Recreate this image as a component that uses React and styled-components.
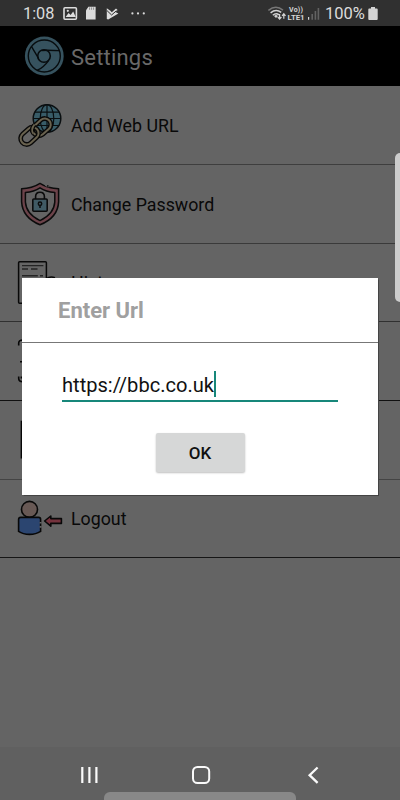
import React from 'react'
import styled, { createGlobalStyle } from 'styled-components'

export default function App() {
  return (
    <Screen>
      <GlobalStyle />
      <StatusBar>
        <Clock>1:08</Clock>
        <NotificationIcons />
        <Spacer />
        <SignalIcons />
        <Percent>100%</Percent>
        <BatteryIcon />
      </StatusBar>

      <Header>
        <BrowserLogo />
        <HeaderTitle>Settings</HeaderTitle>
      </Header>

      <SettingsList>
        <Row line="#3e3e3e">
          <WebIcon />
          <RowLabel>Add Web URL</RowLabel>
        </Row>
        <Row line="#3a3a3a">
          <ShieldIcon />
          <RowLabel>Change Password</RowLabel>
        </Row>
        <Row line="#303030" short>
          <HistoryIcon />
          <RowLabel>History</RowLabel>
        </Row>
        <Row line="#111">
          <ScanIcon />
          <ToggleEdge />
        </Row>
        <Row line="#444">
          <PageIcon />
        </Row>
        <Row line="#161616" short>
          <LogoutIcon />
          <RowLabel>Logout</RowLabel>
        </Row>
      </SettingsList>

      <NavBar>
        <NavIcons />
      </NavBar>

      <EdgeHandle />
      <GestureHandle />

      <Dialog>
        <DialogTitle>Enter Url</DialogTitle>
        <DialogBody>
          <UrlField>
            <UrlText>https://bbc.co.uk</UrlText>
            <Caret />
          </UrlField>
          <OkButton>OK</OkButton>
        </DialogBody>
      </Dialog>
    </Screen>
  )
}

const NotificationIcons = () => (
  <svg width="92" height="26" viewBox="0 0 92 26" fill="#dcdcdc">
    <rect x="1" y="7.8" width="12.4" height="11.4" rx="1" fill="none" stroke="#dcdcdc" strokeWidth="1.6" />
    <path d="M2.6 17 5.6 13l2 2 2.6-3.4 2.6 5.4z" />
    <circle cx="4.8" cy="10.8" r="1.1" />
    <path d="M25.4 6.8h7.2v12.8h-9.6v-9.4z" />
    <path d="M26.6 7.4v2.4M28.6 7.4v2.4M30.6 7.4v2.4" stroke="#777" strokeWidth=".8" />
    <path d="M43.8 8.2 47.4 10.8 48.8 12.2 53 8.4 54.6 10 52.4 12 55.4 13.4 45.2 19.6 43.8 19z" />
    <path d="m44 10.6 4.6 4.4 4.8-4.2" fill="none" stroke="#303030" strokeWidth="1" />
    <circle cx="69.4" cy="13.4" r="1.1" />
    <circle cx="75" cy="13.4" r="1.1" />
    <circle cx="80.8" cy="13.4" r="1.1" />
  </svg>
)

const SignalIcons = () => (
  <svg width="57" height="26" viewBox="268 0 57 26" fill="#d4d4d4">
    <g fill="none" strokeWidth="1.5">
      <path d="M268.4 10.4Q275.8 4.4 283 10.2" stroke="#777" />
      <path d="M270.6 12.8Q276 8.4 281.2 12.4M272.8 15.2Q276 12.4 279 14.8" stroke="#d4d4d4" />
    </g>
    <path d="m274 16 2-1.2 2 1.2-2 2z" />
    <path d="M279.6 14v5m-1.8-2 1.8 2 1.8-2M283.8 18.8v-5m-1.7 2 1.7-2 1.7 2" fill="none" stroke="#d4d4d4" strokeWidth="1.2" />
    <NetworkText x="289" y="12" textLength="14" fontSize="7">Vo))</NetworkText>
    <NetworkText x="287.6" y="19.8" textLength="17" fontSize="7.9">LTE1</NetworkText>
    <path d="M308 17h1.2v2.8H308z" />
    <path d="M311.4 14h1.6v5.8h-1.6zM314.6 11h1.6v8.8h-1.6zM317.6 8h1.6v11.8h-1.6z" fill="#626262" />
  </svg>
)

const BatteryIcon = () => (
  <svg width="10" height="26" viewBox="0 0 10 26" fill="#d4d4d4">
    <path d="M3 7h4v1.5h1.8q.9 0 .9.9v9.7q0 .9-.9.9H1.2q-.9 0-.9-.9V9.4q0-.9.9-.9H3z" />
  </svg>
)

const BrowserLogo = () => (
  <svg width="71" height="60" viewBox="0 26 71 60">
    <circle cx="44.3" cy="56" r="19.4" fill="#36525e" />
    <g fill="none" stroke="#070c0e" strokeWidth="1.4">
      <circle cx="44.3" cy="56" r="16" />
      <circle cx="44" cy="56" r="6.3" strokeWidth="1.6" />
      <path d="M42 50.6Q44 50 60 50.6M38.4 58.2 31.4 46.4M48.4 60.8Q43.6 67.4 37.4 70.2" />
    </g>
  </svg>
)

const WebIcon = () => (
  <svg width="71" height="78" viewBox="0 86 71 78" fill="none" strokeLinejoin="round">
    <circle cx="47" cy="118.5" r="13.8" fill="#385c68" stroke="#0a0f11" strokeWidth="1.5" />
    <g stroke="#0a0f11" strokeWidth="1.2">
      <ellipse cx="47" cy="118.5" rx="6.8" ry="13.8" />
      <path d="M47 104.7v27.6M34.6 112.2h24.8M33.2 118.5h27.6M34.6 125.5h24.8" />
    </g>
    <g>
      <rect x="-10" y="-6" width="20" height="12" rx="6" transform="translate(41.8 127.2) rotate(-42)" stroke="#090909" strokeWidth="4.8" />
      <rect x="-10" y="-6" width="20" height="12" rx="6" transform="translate(41.8 127.2) rotate(-42)" stroke="#69624f" strokeWidth="2" />
      <rect x="-10" y="-6" width="20" height="12" rx="6" transform="translate(29.6 135.8) rotate(-42)" stroke="#090909" strokeWidth="4.8" />
      <rect x="-10" y="-6" width="20" height="12" rx="6" transform="translate(29.6 135.8) rotate(-42)" stroke="#69624f" strokeWidth="2" />
      <path d="M34.2 125.2q-3.8 4.7-.8 8.2" stroke="#090909" strokeWidth="4.4" />
      <path d="M34.4 124.6q-4 5-1 9.2" stroke="#69624f" strokeWidth="1.8" />
    </g>
  </svg>
)

const ShieldIcon = () => (
  <svg width="71" height="78" viewBox="0 165 71 78" fill="none" stroke="#0b0b0b" strokeWidth="1.5" strokeLinejoin="round">
    <path d="M40 183.4Q48 188.6 58.6 188.8V201.6Q58 217.5 40 224.8 22.4 217.5 21.6 201.6V188.8Q32 188.6 40 183.4z" fill="#6c434a" />
    <path d="M40 187.8Q46 191.8 54.8 192.6V202Q54 214 40 220.6 26.2 214 25.4 202V192.6Q34 191.8 40 187.8z" fill="#646464" />
    <path d="M45.4 184.8 48.8 186.6" stroke="#646464" strokeWidth="2" />
    <path d="M47 186h1.5" />
    <path d="M35.6 199v-2.4q0-4.4 4.4-4.4t4.4 4.4v2.4" strokeWidth="1.6" />
    <rect x="32.8" y="199" width="14.4" height="12.2" rx="1" fill="#405a64" strokeWidth="1.6" />
    <circle cx="40" cy="203.8" r="1.7" />
    <path d="M40 205.5v2.5" />
  </svg>
)

const HistoryIcon = () => (
  <svg width="71" height="77" viewBox="0 244 71 77" fill="none" stroke="#090909">
    <rect x="18.6" y="261.7" width="27.8" height="41.6" rx="1" strokeWidth="1.5" fill="#656565" />
    <path d="M22 265.6h21.4M22 269h6M31 269h6.5M22 275.8h15.8M40 275.8h3" stroke="#242424" strokeWidth="1.4" />
    <path d="M46 278.8Q50 275.8 55 277.6" strokeWidth="1.5" />
  </svg>
)

const ScanIcon = () => (
  <svg width="71" height="78" viewBox="0 322 71 78" fill="none" stroke="#070707" strokeWidth="1.6">
    <path d="M18.7 345.5V343Q18.7 340 23 340M20 361.8h3M18.7 376.4v2.2q0 3.2 4 3.2M21.4 376.4v2" />
  </svg>
)

const PageIcon = () => (
  <svg width="71" height="78" viewBox="0 401 71 78">
    <path d="M21.4 421.4h25v36.4h-25z" fill="none" stroke="#070707" strokeWidth="1.5" />
  </svg>
)

const LogoutIcon = () => (
  <svg width="71" height="77" viewBox="0 480 71 77" stroke="#080808" strokeWidth="1.6" strokeLinejoin="round">
    <circle cx="29.5" cy="509.4" r="8" fill="#685955" />
    <path d="M20.8 517.4H38.6Q40.6 517.4 40.6 519.4V531.4Q36 534.4 29.5 534.4T18.6 531.4V519.6Q18.6 517.4 20.8 517.4z" fill="#2b4570" />
    <path d="M40.6 522v1.4M40.6 526v1.8" stroke="#646464" strokeWidth="2" />
    <path d="m44.6 521 6.2-5v2.6h10.6v4.8H50.8v2.8z" fill="#74323d" />
  </svg>
)

const NavIcons = () => (
  <svg width="400" height="53" viewBox="0 747 400 53" fill="none" stroke="#fafafa" strokeWidth="2">
    <path d="M82.3 767v16M89.4 767v16M96.4 767v16" strokeWidth="2.2" />
    <rect x="193" y="767" width="16.2" height="16" rx="4.5" />
    <path d="m317.6 767.5-8 7.7 8 7.7" strokeWidth="2.3" />
  </svg>
)

const GlobalStyle = createGlobalStyle`
  * {
    box-sizing: border-box;
  }

  body {
    margin: 0;
    background: #646464;
    font-family: Roboto, sans-serif;
  }
`

const Screen = styled.div`
  position: relative;
  display: flex;
  flex-direction: column;
  width: 400px;
  height: 800px;
  overflow: hidden;
  background: #646464;

  svg {
    display: block;
    flex: none;
  }
`

const StatusBar = styled.div`
  display: flex;
  align-items: center;
  height: 26px;
  padding: 0 22px 0 23px;
  background: #303030;
  color: #dcdcdc;
`

const Clock = styled.span`
  width: 40px;
  padding-top: 2px;
  font-size: 16.3px;
  line-height: 24px;
`

const Spacer = styled.div`
  flex: 1;
`

const NetworkText = styled.text`
  font-weight: 700;
`

const Percent = styled.span`
  width: 43px;
  padding-top: 2px;
  font-size: 16.5px;
  line-height: 24px;
  white-space: nowrap;
`

const Header = styled.header`
  display: flex;
  align-items: center;
  height: 60px;
  background: #000;
`

const HeaderTitle = styled.h1`
  margin: 2px 0 0;
  color: #696969;
  font-size: 22px;
  font-weight: 400;
  letter-spacing: 0.2px;
`

const SettingsList = styled.div`
  flex: 1;
`

const Row = styled.div.withConfig({
  shouldForwardProp: prop => !['line', 'short'].includes(prop)
})`
  display: flex;
  align-items: center;
  height: ${props => (props.short ? 78 : 79)}px;
  border-bottom: 1px solid ${props => props.line};
`

const RowLabel = styled.span`
  padding-top: 1px;
  color: #090909;
  font-size: 17.8px;
  line-height: 24px;
`

const ToggleEdge = styled.div`
  width: 20px;
  height: 14px;
  margin-left: auto;
  margin-right: 21px;
  border-radius: 7px;
  background: #161616;
`

const NavBar = styled.nav`
  height: 53px;
  background: #606060;
`

const EdgeHandle = styled.div`
  position: absolute;
  top: 153px;
  right: 0;
  width: 5px;
  height: 149px;
  border-radius: 5px 0 0 5px;
  background: #cdcdcd;
`

const GestureHandle = styled.div`
  position: absolute;
  bottom: 0;
  left: 104px;
  width: 192px;
  height: 8px;
  border-radius: 6px 6px 0 0;
  background: #888;
`

const Dialog = styled.div`
  position: absolute;
  top: 278px;
  left: 22px;
  width: 356px;
  height: 217px;
  background: #fff;
  box-shadow: 0 0 1px 0.5px #444;
`

const DialogTitle = styled.h2`
  height: 65px;
  margin: 0;
  padding-left: 36px;
  border-bottom: 1px solid #777;
  color: #a0a0a0;
  font-size: 22px;
  font-weight: 700;
  line-height: 66px;
`

const DialogBody = styled.div`
  display: flex;
  flex-direction: column;
  align-items: center;
  padding-top: 28px;
`

const UrlField = styled.div`
  display: flex;
  width: 276px;
  height: 31px;
  border-bottom: 2px solid #17877a;
`

const UrlText = styled.span`
  color: #111;
  font-size: 20.1px;
  line-height: 28px;
`

const Caret = styled.span`
  width: 2px;
  height: 26px;
  background: #17877a;
`

const OkButton = styled.button`
  width: 89px;
  height: 39px;
  margin-top: 31px;
  padding: 0;
  border: 0;
  border-radius: 2px;
  background: #d6d7d7;
  box-shadow: 0 1px 2px rgba(0, 0, 0, 0.25);
  color: #111;
  font-family: inherit;
  font-size: 17px;
  font-weight: 500;
`
